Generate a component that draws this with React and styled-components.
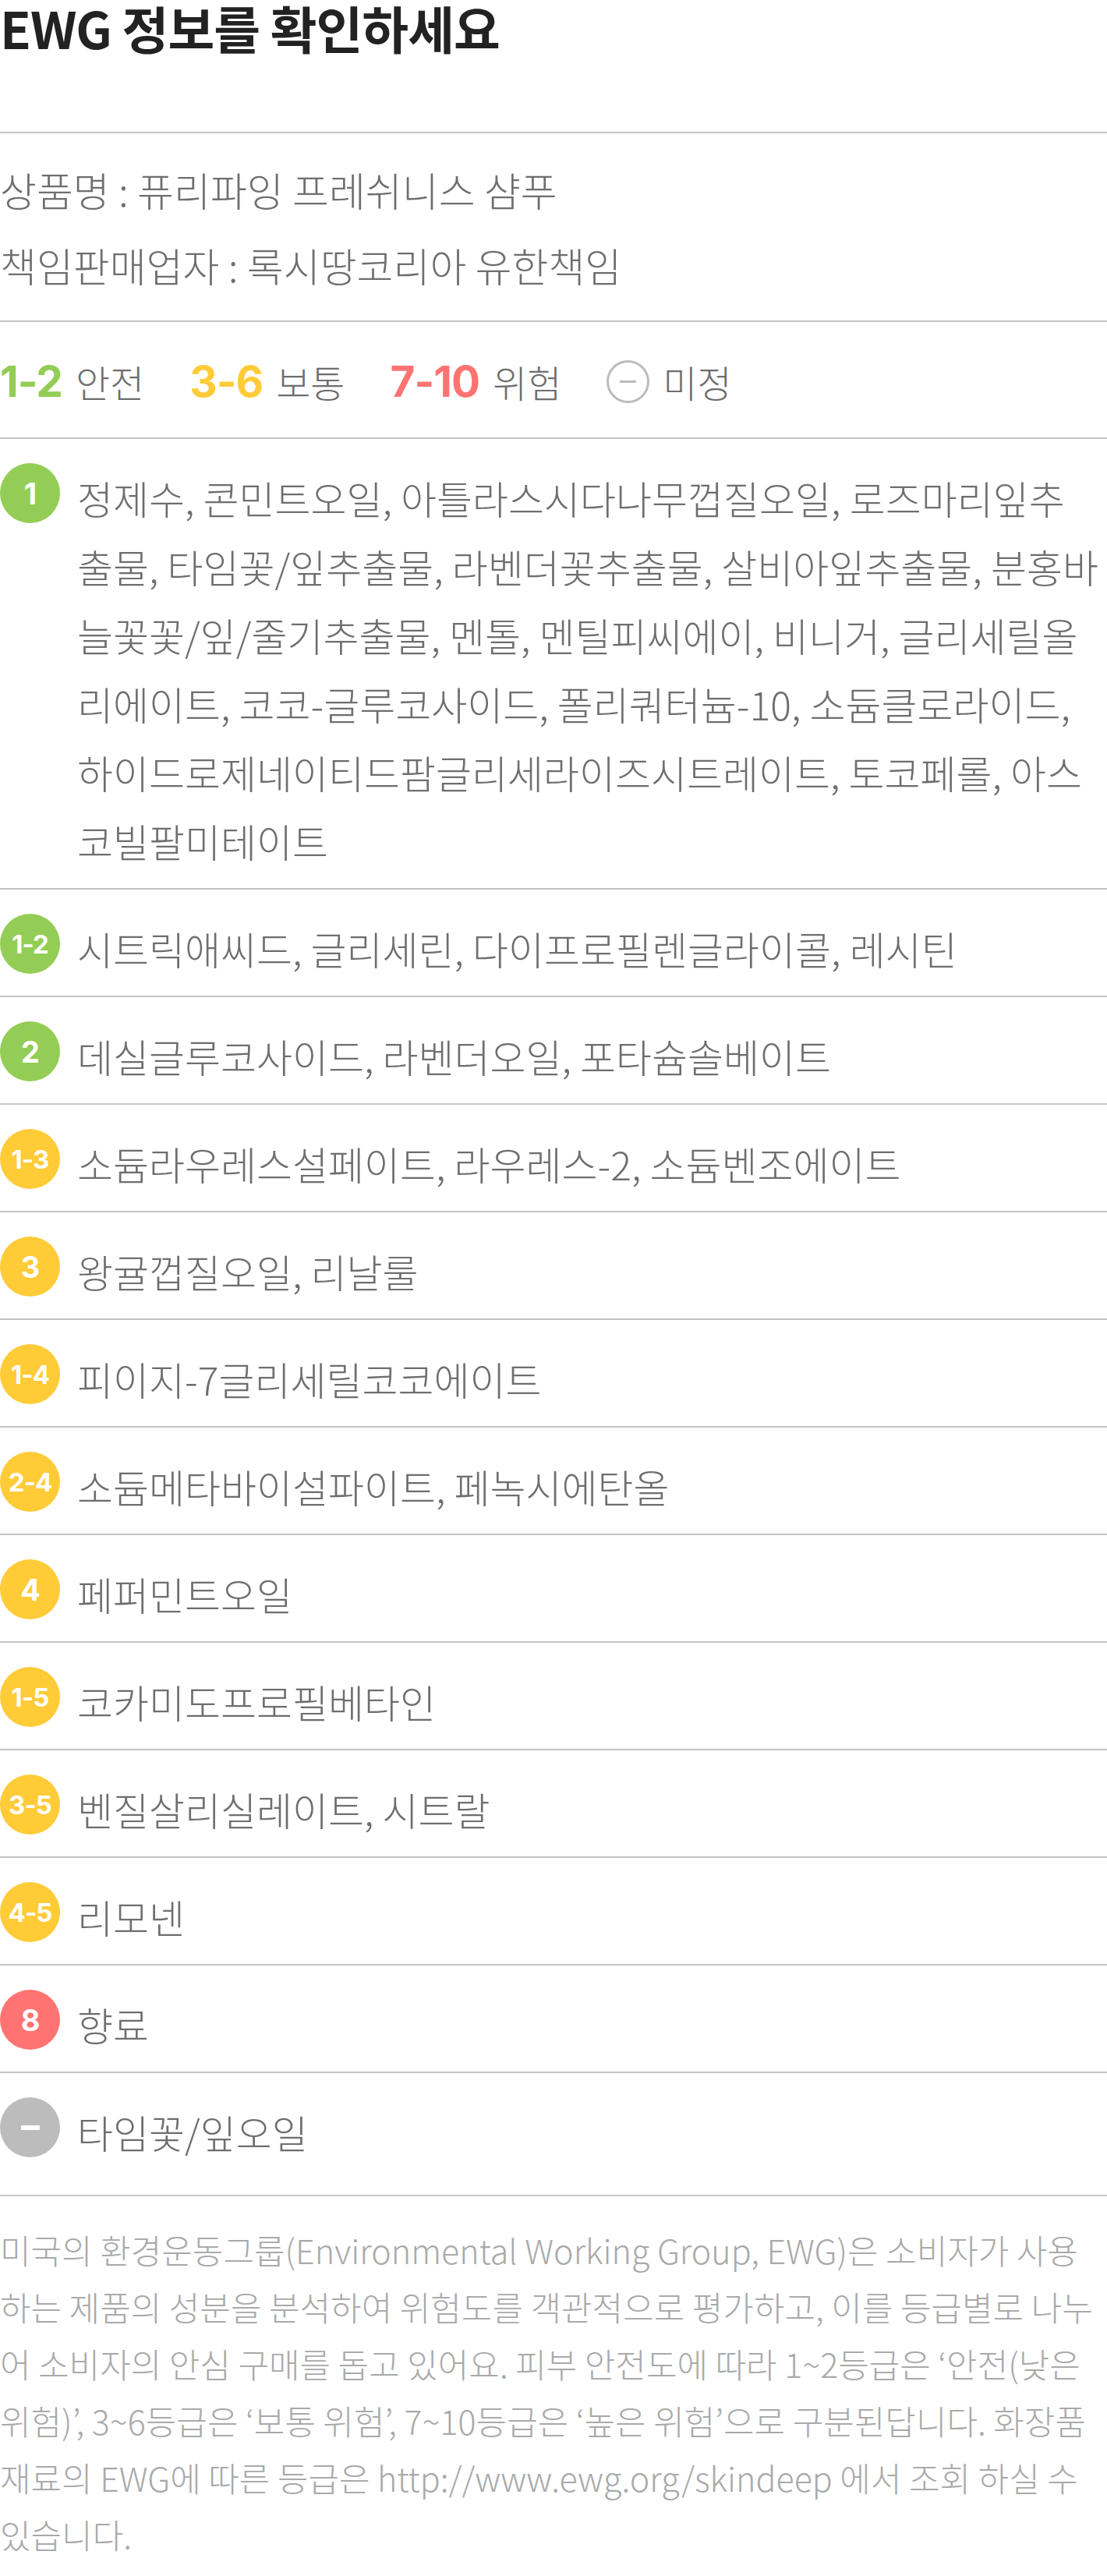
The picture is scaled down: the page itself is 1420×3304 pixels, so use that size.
import React from "react";
import styled, { createGlobalStyle } from "styled-components";

const GlobalStyle = createGlobalStyle`
    * { box-sizing: border-box; }
    body {
        margin: 0;
        background: #fff;
        font-family: "Noto Sans CJK KR", "Noto Sans", sans-serif;
    }
`;

const colors = {
    safe: "#93cd55",
    normal: "#ffcb37",
    danger: "#ff7472",
    none: "#bcbcbc",
};

const ingredients = [
    { grade: "1", level: "safe", text: "정제수, 콘민트오일, 아틀라스시다나무껍질오일, 로즈마리잎추\n출물, 타임꽃/잎추출물, 라벤더꽃추출물, 살비아잎추출물, 분홍바\n늘꽃꽃/잎/줄기추출물, 멘톨, 멘틸피씨에이, 비니거, 글리세릴올\n리에이트, 코코-글루코사이드, 폴리쿼터늄-10, 소듐클로라이드,\n하이드로제네이티드팜글리세라이즈시트레이트, 토코페롤, 아스\n코빌팔미테이트" },
    { grade: "1-2", level: "safe", text: "시트릭애씨드, 글리세린, 다이프로필렌글라이콜, 레시틴" },
    { grade: "2", level: "safe", text: "데실글루코사이드, 라벤더오일, 포타슘솔베이트" },
    { grade: "1-3", level: "normal", text: "소듐라우레스설페이트, 라우레스-2, 소듐벤조에이트" },
    { grade: "3", level: "normal", text: "왕귤껍질오일, 리날룰" },
    { grade: "1-4", level: "normal", text: "피이지-7글리세릴코코에이트" },
    { grade: "2-4", level: "normal", text: "소듐메타바이설파이트, 페녹시에탄올" },
    { grade: "4", level: "normal", text: "페퍼민트오일" },
    { grade: "1-5", level: "normal", text: "코카미도프로필베타인" },
    { grade: "3-5", level: "normal", text: "벤질살리실레이트, 시트랄" },
    { grade: "4-5", level: "normal", text: "리모넨" },
    { grade: "8", level: "danger", text: "향료" },
    { grade: "-", level: "none", text: "타임꽃/잎오일" },
];

const Main = styled.main`
    width: 1420px;
    color: #6e6e6e;
`;

const Title = styled.h1`
    margin: 0;
    height: 171px;
    padding-top: 2px;
    font-size: 65px;
    line-height: 66px;
    font-weight: 700;
    color: #222;
    letter-spacing: -1px;
    border-bottom: 2px solid #c4c4c4;
`;

const Info = styled.ul`
    list-style: none;
    margin: 0;
    padding: 24px 0 22px;
    border-bottom: 2px solid #c4c4c4;

    li {
        font-size: 51px;
        line-height: 97px;
        font-weight: 300;
    }
`;

const Legend = styled.div`
    display: flex;
    align-items: center;
    height: 150px;
    padding-top: 4px;
    border-bottom: 2px solid #c4c4c4;
`;

const LegendItem = styled.span`
    display: flex;
    align-items: center;
    gap: 17px;
    margin-right: 58px;
    font-size: 48px;
    font-weight: 300;
`;

const LegendNum = styled.b`
    font-family: Inter, "Noto Sans", sans-serif;
    font-size: 55px;
    font-weight: 700;
    letter-spacing: -1px;
    color: ${(props) => colors[props.$level]};
`;

const EmptyCircle = styled.span`
    position: relative;
    width: 55px;
    height: 55px;
    border: 3px solid ${colors.none};
    border-radius: 50%;

    &::after {
        content: "";
        position: absolute;
        left: 14px;
        right: 14px;
        top: 23px;
        height: 3px;
        background: ${colors.none};
    }
`;

const List = styled.ul`
    list-style: none;
    margin: 0;
    padding: 0 0 20px;
`;

const Row = styled.li`
    display: flex;
    align-items: flex-start;
    gap: 22px;
    padding: 31px 0 17px;

    & + & {
        border-top: 2px solid #c4c4c4;
    }
`;

const Badge = styled.span`
    flex: 0 0 77px;
    height: 77px;
    border-radius: 50%;
    display: flex;
    align-items: center;
    justify-content: center;
    background: ${(props) => colors[props.$level]};
    color: #fff;
    font-family: Inter, "Noto Sans", sans-serif;
    font-weight: 700;
    font-size: ${(props) => (props.$short ? "38px" : "33px")};
    letter-spacing: -1px;
`;

const Dash = styled.span`
    width: 24px;
    height: 6px;
    background: #fff;
`;

const RowText = styled.p`
    margin: 0;
    font-size: 50px;
    line-height: 88px;
    font-weight: 300;
    white-space: pre-line;
`;

const Footer = styled.footer`
    border-top: 2px solid #c4c4c4;
    padding: 32px 0 17px;

    p {
        margin: 0;
        font-size: 43px;
        line-height: 73px;
        font-weight: 300;
        color: #a9a9a9;
        white-space: pre-line;
    }
`;

const footerText =
    "미국의 환경운동그룹(Environmental Working Group, EWG)은 소비자가 사용\n" +
    "하는 제품의 성분을 분석하여 위험도를 객관적으로 평가하고, 이를 등급별로 나누\n" +
    "어 소비자의 안심 구매를 돕고 있어요. 피부 안전도에 따라 1~2등급은 ‘안전(낮은\n" +
    "위험)’, 3~6등급은 ‘보통 위험’, 7~10등급은 ‘높은 위험’으로 구분된답니다. 화장품\n" +
    "재료의 EWG에 따른 등급은 http://www.ewg.org/skindeep 에서 조회 하실 수\n" +
    "있습니다.";

function App() {
    return (
        <Main>
            <GlobalStyle />
            <Title>EWG 정보를 확인하세요</Title>
            <Info>
                <li>상품명 : 퓨리파잉 프레쉬니스 샴푸</li>
                <li>책임판매업자 : 록시땅코리아 유한책임</li>
            </Info>
            <Legend>
                <LegendItem>
                    <LegendNum $level="safe">1-2</LegendNum>안전
                </LegendItem>
                <LegendItem>
                    <LegendNum $level="normal">3-6</LegendNum>보통
                </LegendItem>
                <LegendItem>
                    <LegendNum $level="danger">7-10</LegendNum>위험
                </LegendItem>
                <LegendItem>
                    <EmptyCircle />미정
                </LegendItem>
            </Legend>
            <List>
                {ingredients.map((item) => (
                    <Row key={item.grade}>
                        <Badge $level={item.level} $short={item.grade.length === 1}>
                            {item.grade === "-" ? <Dash /> : item.grade}
                        </Badge>
                        <RowText>{item.text}</RowText>
                    </Row>
                ))}
            </List>
            <Footer>
                <p>{footerText}</p>
            </Footer>
        </Main>
    );
}

export default App;
